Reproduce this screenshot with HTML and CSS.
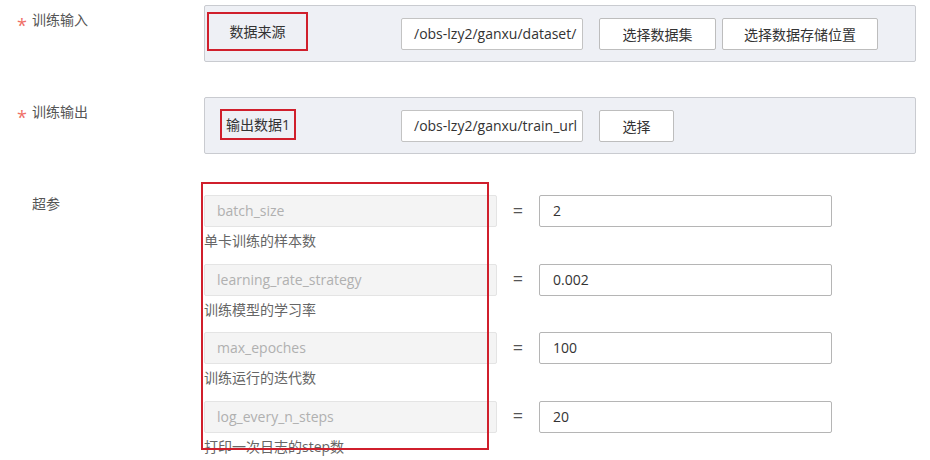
FILE: index.html
```html
<!DOCTYPE html>
<html lang="zh">
<head>
<meta charset="utf-8">
<link rel="stylesheet" href="styles.css">
</head>
<body>
<div class="form">
  <div class="row row-in">
    <div class="label"><span class="star">*</span>训练输入</div>
    <div class="panel">
      <div class="keycol"><div class="tag tag-1">数据来源</div></div>
      <div class="path">/obs-lzy2/ganxu/dataset/</div>
      <button class="btn btn-ds">选择数据集</button>
      <button class="btn btn-store">选择数据存储位置</button>
    </div>
  </div>
  <div class="row row-out">
    <div class="label"><span class="star">*</span>训练输出</div>
    <div class="panel">
      <div class="keycol"><div class="tag tag-2">输出数据1</div></div>
      <div class="path">/obs-lzy2/ganxu/train_url</div>
      <button class="btn btn-sel">选择</button>
    </div>
  </div>
  <div class="row row-params">
    <div class="label label-plain">超参</div>
    <div class="params">
      <div class="mark"></div>
      <div class="param">
        <div class="pline"><div class="pkey">batch_size</div><span class="eq">=</span><div class="pval">2</div></div>
        <div class="pdesc">单卡训练的样本数</div>
      </div>
      <div class="param">
        <div class="pline"><div class="pkey">learning_rate_strategy</div><span class="eq">=</span><div class="pval">0.002</div></div>
        <div class="pdesc">训练模型的学习率</div>
      </div>
      <div class="param">
        <div class="pline"><div class="pkey">max_epoches</div><span class="eq">=</span><div class="pval">100</div></div>
        <div class="pdesc">训练运行的迭代数</div>
      </div>
      <div class="param">
        <div class="pline"><div class="pkey">log_every_n_steps</div><span class="eq">=</span><div class="pval">20</div></div>
        <div class="pdesc">打印一次日志的step数</div>
      </div>
    </div>
  </div>
</div>
</body>
</html>
```
FILE: styles.css
```css
* { box-sizing: border-box; }
html, body { margin: 0; background: #fff; }
body {
  font-family: "Open Sans", "Noto Sans CJK SC", sans-serif;
  font-size: 14px;
  color: #333;
  width: 930px;
  height: 460px;
  overflow: hidden;
}
.form { padding-top: 5px; }
.row {
  display: grid;
  grid-template-columns: 204px 712px;
  align-items: start;
}
.row-out { margin-top: 35px; }
.row-params { margin-top: 28px; }
.label {
  color: #555;
  line-height: 20px;
  padding-top: 5px;
  padding-left: 17px;
  white-space: nowrap;
}
.label-plain { padding-left: 32px; padding-top: 12px; }
.star {
  display: inline-block;
  color: #ef6f66;
  width: 15px;
  font-size: 18px;
  line-height: 20px;
  vertical-align: top;
  position: relative;
  top: 5px;
}
.panel {
  height: 57px;
  background: #eef0f5;
  border: 1px solid #c9cbd0;
  border-radius: 2px;
  display: flex;
  align-items: center;
}
.keycol {
  width: 196px;
  display: flex;
  align-items: center;
}
.tag {
  border: 2px solid #d01f2c;
  color: #333;
  display: flex;
  align-items: center;
  justify-content: center;
}
.tag-1 { width: 101px; height: 39px; margin-left: 2px; margin-top: -5px; }
.tag-2 { width: 76px; height: 31px; margin-left: 15px; margin-top: -3px; }
.path {
  width: 182px;
  height: 32px;
  background: #fff;
  border: 1px solid #c3c3c3;
  border-radius: 2px;
  padding-left: 12px;
  line-height: 30px;
  white-space: nowrap;
  overflow: hidden;
  color: #333;
}
.btn {
  font: inherit;
  height: 32px;
  background: #fff;
  border: 1px solid #bdbdbd;
  border-radius: 2px;
  color: #333;
  padding: 0;
}
.btn-ds { width: 117px; margin-left: 16px; }
.btn-store { width: 156px; margin-left: 6px; }
.btn-sel { width: 75px; margin-left: 16px; }
.params {
  position: relative;
  padding-top: 13px;
}
.mark {
  position: absolute;
  left: -3px;
  top: 0;
  width: 288px;
  height: 268px;
  border: 2px solid #d01f2c;
  z-index: 2;
}
.param { height: 68.67px; }
.pline {
  display: flex;
  align-items: center;
}
.pkey {
  width: 293px;
  height: 32px;
  background: #f4f4f4;
  border: 1px solid #e4e4e4;
  border-radius: 2px;
  color: #b0b0b0;
  padding-left: 12px;
  line-height: 30px;
}
.eq {
  width: 42px;
  text-align: center;
  color: #555;
  font-size: 18px;
  line-height: 30px;
  margin-top: -3px;
}
.pval {
  width: 293px;
  height: 32px;
  border: 1px solid #b5b5b5;
  border-radius: 2px;
  padding-left: 13px;
  line-height: 30px;
  color: #333;
}
.pdesc {
  color: #666;
  line-height: 20px;
  margin-top: 4px;
}
```
